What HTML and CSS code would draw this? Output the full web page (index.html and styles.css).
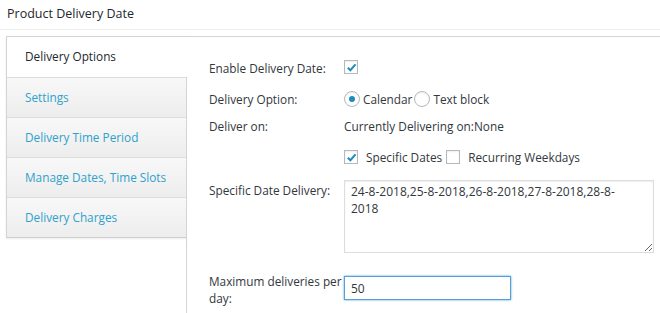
FILE: index.html
```html
<!DOCTYPE html>
<html>
<head>
    <title>Product Delivery Date</title>
    <link rel="stylesheet" href="styles.css">
</head>
<body>
    <h2 class="page-title">Product Delivery Date</h2>

    <div class="tabs">
        <!-- Vertical tab list -->
        <ul class="tab-nav">
            <li class="active"><a href="#">Delivery Options</a></li>
            <li><a href="#">Settings</a></li>
            <li><a href="#">Delivery Time Period</a></li>
            <li><a href="#">Manage Dates, Time Slots</a></li>
            <li><a href="#">Delivery Charges</a></li>
        </ul>

        <!-- Delivery Options panel -->
        <div class="tab-panel">
            <div class="row row-enable">
                <label class="field-label">Enable Delivery Date:</label>
                <div class="field">
                    <span class="check checked"><svg viewBox="0 0 12 12"><path d="M2 6.2 L4.8 9 L10.4 2.6" /></svg></span>
                </div>
            </div>
            <div class="row row-option">
                <label class="field-label">Delivery Option:</label>
                <div class="field">
                    <span class="radio selected"></span><span class="opt">Calendar</span>
                    <span class="radio"></span><span class="opt">Text block</span>
                </div>
            </div>
            <div class="row row-on">
                <label class="field-label">Deliver on:</label>
                <div class="field">Currently Delivering on:None</div>
            </div>
            <div class="row row-types">
                <label class="field-label"></label>
                <div class="field">
                    <span class="check checked"><svg viewBox="0 0 12 12"><path d="M2 6.2 L4.8 9 L10.4 2.6" /></svg></span><span class="opt wide">Specific Dates</span>
                    <span class="check"></span><span class="opt wide">Recurring Weekdays</span>
                </div>
            </div>
            <div class="row row-dates">
                <label class="field-label">Specific Date Delivery:</label>
                <div class="field">
                    <textarea class="dates">24-8-2018,25-8-2018,26-8-2018,27-8-2018,28-8-2018</textarea>
                </div>
            </div>
            <div class="row row-max">
                <label class="field-label">Maximum deliveries per day:</label>
                <div class="field">
                    <input type="text" class="max-input" value="50">
                </div>
            </div>
        </div>
    </div>
</body>
</html>
```

FILE: styles.css
```css
body {
    margin: 0;
    font-family: "Open Sans", Arial, sans-serif;
    font-size: 11.8px;
    color: #32373c;
    background-color: #fff;
    overflow: hidden;
}

.page-title {
    margin: 0;
    height: 29px;
    padding: 0 0 0 7px;
    font-size: 12.5px;
    font-weight: normal;
    line-height: 28px;
    color: #23282d;
    border-bottom: 1px solid #ededed;
}

.tabs {
    display: flex;
    margin: 6px 0 0 6px;
    border-top: 1px solid #d4d4d4;
    min-height: 290px;
}

.tab-nav {
    list-style: none;
    margin: 0;
    padding: 0;
    width: 179px;
    flex-shrink: 0;
    align-self: flex-start;
    border-left: 1px solid #d4d4d4;
    border-bottom: 1px solid #cfcfcf;
    box-shadow: 0 1px 2px rgba(0, 0, 0, 0.08);
}

.tab-nav li {
    height: 39px;
    border-top: 1px solid #dcdcdc;
    background: linear-gradient(#f8f8f8, #ededed);
}

.tab-nav li:first-child {
    border-top: none;
    height: 40px;
}

.tab-nav li.active {
    position: relative;
    z-index: 1;
    margin-right: -1px;
    background: #fff;
}

.tab-nav a {
    display: block;
    padding-left: 18px;
    line-height: 39px;
    color: #2ea2cc;
    text-decoration: none;
}

.tab-nav li.active a {
    color: #23282d;
    line-height: 38px;
}

.tab-panel {
    flex: 1;
    border-left: 1px solid #d4d4d4;
    padding: 16px 0 0 22px;
}

.row {
    display: flex;
    align-items: flex-start;
}

.field-label {
    width: 135px;
    flex-shrink: 0;
    line-height: 16px;
}

.field {
    display: flex;
    align-items: center;
    line-height: 16px;
}

.row-enable {
    height: 31px;
    padding-top: 7px;
}

.row-option {
    height: 27px;
}

.row-on {
    height: 31px;
}

.row-types {
    height: 31px;
}

.row-dates {
    height: 96px;
}

.row-dates .field-label {
    padding-top: 2px;
}

.row-max .field-label {
    margin-top: -3px;
    line-height: 16.5px;
}

.check {
    display: inline-flex;
    align-items: center;
    justify-content: center;
    width: 12px;
    height: 12px;
    border: 1px solid #b4b9be;
    background: #fff;
    box-shadow: inset 0 1px 2px rgba(0, 0, 0, 0.07);
}

.check svg {
    width: 11px;
    height: 11px;
    fill: none;
    stroke: #1e8cbe;
    stroke-width: 2.2;
}

.radio {
    display: inline-block;
    position: relative;
    width: 14px;
    height: 14px;
    border: 1px solid #b4b9be;
    border-radius: 50%;
    background: #fff;
    box-shadow: inset 0 1px 2px rgba(0, 0, 0, 0.07);
}

.radio.selected::after {
    content: "";
    position: absolute;
    left: 4px;
    top: 4px;
    width: 6px;
    height: 6px;
    border-radius: 50%;
    background: #1e8cbe;
}

.opt {
    margin: 0 2px 0 3px;
}

.opt.wide {
    margin: 0 4px 0 8px;
}

.dates {
    display: block;
    box-sizing: border-box;
    width: 310px;
    height: 73px;
    margin: 0;
    padding: 2px 18px 2px 6px;
    font-family: "Open Sans", Arial, sans-serif;
    font-size: 12px;
    line-height: 17px;
    color: #32373c;
    border: 1px solid #dddddd;
    box-shadow: inset 0 1px 2px rgba(0, 0, 0, 0.07);
    resize: both;
}

.max-input {
    box-sizing: border-box;
    width: 167px;
    height: 24px;
    margin: 0;
    padding: 2px 6px;
    font-family: "Open Sans", Arial, sans-serif;
    font-size: 12px;
    color: #32373c;
    border: 1px solid #5b9dd9;
    box-shadow: 0 0 2px rgba(30, 140, 190, 0.8);
    outline: none;
}
```
